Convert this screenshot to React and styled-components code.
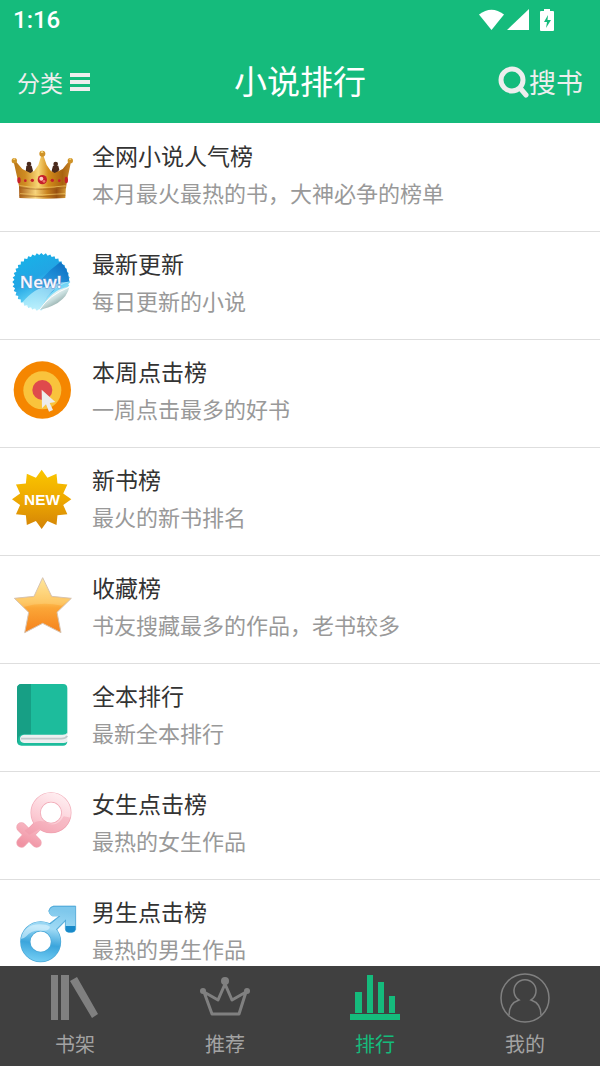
import React from "react";
import styled, { createGlobalStyle } from "styled-components";

const GlobalStyle = createGlobalStyle`
  * {
    box-sizing: border-box;
  }

  body {
    margin: 0;
    background: #ffffff;
    font-family: "Noto Sans CJK SC", "Noto Sans", sans-serif;
  }
`;

const Page = styled.div`
  display: flex;
  flex-direction: column;
  height: 100vh;
`;

const Header = styled.header`
  flex: none;
  background: #15bb7c;
  color: #ffffff;
`;

const StatusBar = styled.div`
  display: flex;
  align-items: center;
  height: 40px;
  padding: 0 46px 0 13px;
`;

const Clock = styled.time`
  flex: 1;
  font-family: Roboto, sans-serif;
  font-size: 24px;
  font-weight: 500;
  line-height: 40px;
`;

const StatusIcons = styled.div`
  display: flex;
  align-items: center;
  gap: 3px;

  svg:last-child {
    margin-left: 8px;
  }
`;

const TitleBar = styled.div`
  display: grid;
  grid-template-columns: 1fr auto 1fr;
  align-items: center;
  height: 83px;
  padding: 0 17px;
`;

const Title = styled.h1`
  margin: 0;
  padding-bottom: 4px;
  font-size: 33px;
  font-weight: 400;
  line-height: 48px;
`;

const BarButton = styled.button`
  display: flex;
  align-items: center;
  justify-self: ${(props) => (props.$end ? "end" : "start")};
  gap: ${(props) => (props.$end ? "0" : "7px")};
  padding: 0;
  border: none;
  background: none;
  color: #eeeeee;
  font-family: inherit;
  font-size: ${(props) => (props.$end ? "27px" : "23px")};
  line-height: 40px;
  cursor: pointer;
`;

const RankList = styled.ul`
  flex: 1;
  min-height: 0;
  margin: 0;
  padding: 1px 0 0;
  list-style: none;
  overflow-y: auto;
  scrollbar-width: none;
`;

const RankItem = styled.li`
  border-bottom: 1px solid #dedede;
`;

const RankLink = styled.a`
  display: flex;
  gap: 18px;
  padding: 16px 10px 24px;
  color: inherit;
  text-decoration: none;
`;

const RankIcon = styled.svg`
  flex: none;
  width: 64px;
  height: 64px;
  margin-top: 2px;
  overflow: visible;
`;

const RankText = styled.div`
  display: flex;
  flex-direction: column;
  gap: 7px;
  min-width: 0;
`;

const RankName = styled.span`
  color: #333333;
  font-size: 23px;
  line-height: 30px;
`;

const RankNote = styled.span`
  color: #999999;
  font-size: 22px;
  line-height: 30px;
`;

const TabBar = styled.nav`
  flex: none;
  display: grid;
  grid-template-columns: repeat(4, 1fr);
  background: #404040;
`;

const Tab = styled.button`
  display: flex;
  flex-direction: column;
  align-items: center;
  gap: 9px;
  padding: 7px 0 10px;
  border: none;
  background: none;
  color: ${(props) => (props.$active ? "#15bb7c" : "#a3a3a3")};
  font-family: inherit;
  font-size: 20px;
  line-height: 24px;
  cursor: pointer;

  svg {
    color: ${(props) => (props.$active ? "#15bb7c" : "#808080")};
  }
`;

const burst = (cx, cy, outer, inner, count) =>
  Array.from({ length: count * 2 }, (_, i) => {
    const r = i % 2 ? inner : outer;
    const a = (Math.PI * i) / count - Math.PI / 2;
    return `${(cx + r * Math.cos(a)).toFixed(1)},${(cy + r * Math.sin(a)).toFixed(1)}`;
  }).join(" ");

const GoldCrown = () => (
  <RankIcon viewBox="30 51 192 192" aria-hidden="true">
    <defs>
      <linearGradient id="gold" x1="0" x2="1">
        <stop offset="0" stopColor="#b97618" />
        <stop offset="0.2" stopColor="#d08c22" />
        <stop offset="0.43" stopColor="#f9d878" />
        <stop offset="0.6" stopColor="#d58e1c" />
        <stop offset="0.85" stopColor="#a9620f" />
        <stop offset="1" stopColor="#c98626" />
      </linearGradient>
      <linearGradient id="goldBand" x1="0" x2="1">
        <stop offset="0" stopColor="#a85c14" />
        <stop offset="0.35" stopColor="#f7d47c" />
        <stop offset="0.6" stopColor="#c98320" />
        <stop offset="0.8" stopColor="#984f10" />
        <stop offset="1" stopColor="#d39a35" />
      </linearGradient>
    </defs>
    <g fill="#4a2a1c">
      <circle cx="87" cy="117" r="7" />
      <circle cx="167" cy="117" r="7" />
      <path d="M79 122h16l4 15-8 18-14-15zM159 122h16l3 12-14 20-9-17z" />
    </g>
    <path
      d="M41 110l5-3 21 25 24 12 12-7 12-17 9-29h6l10 29 12 17 12 7 24-12 20-25 5 3-12 58-3 22H58l-4-22z"
      fill="url(#gold)"
    />
    <path d="M57 183q70 12 141 0l-2 36q-67 4-138 0z" fill="url(#goldBand)" />
    <path
      d="M57 188q70 10 141 0M58 212q68 5 138 0"
      fill="none"
      stroke="#a0601a"
      strokeWidth="2"
    />
    <path
      d="M58 182q70 11 139 0M60 206q68 7 135 0"
      fill="none"
      stroke="#f6ce6b"
      strokeWidth="2"
    />
    <g fill="#cf9227">
      <circle cx="43" cy="107" r="8" />
      <circle cx="127" cy="86" r="9" />
      <circle cx="211" cy="107" r="8" />
    </g>
    <path d="M122 84l4-8 5 7zM39 104l4-5 3 5zM207 104l4-5 3 5z" fill="#f8dc86" />
    <g fill="#c6202a">
      <circle cx="127" cy="164" r="14" />
      <ellipse cx="57" cy="166" rx="5" ry="9" />
      <ellipse cx="199" cy="165" rx="5" ry="10" />
      <circle cx="76" cy="167" r="4" />
      <circle cx="97" cy="166" r="5" />
      <circle cx="157" cy="166" r="5" />
      <circle cx="178" cy="167" r="4" />
    </g>
    <circle cx="124" cy="161" r="6" fill="#ffc9c2" />
    <circle cx="132" cy="169" r="4" fill="#ef7770" />
  </RankIcon>
);

const NewSticker = () => (
  <RankIcon viewBox="30 375 192 192" aria-hidden="true">
    <defs>
      <linearGradient id="sticker" x1="0.15" y1="0.05" x2="0.65" y2="1">
        <stop offset="0" stopColor="#18b2e8" />
        <stop offset="0.42" stopColor="#22a5e4" />
        <stop offset="0.65" stopColor="#54c9f2" />
        <stop offset="1" stopColor="#d2f8ff" />
      </linearGradient>
      <linearGradient id="shade" x1="1" y1="0" x2="0" y2="1">
        <stop offset="0" stopColor="#0b69be" />
        <stop offset="0.5" stopColor="#2194de" stopOpacity="0.8" />
        <stop offset="1" stopColor="#7adcf7" stopOpacity="0" />
      </linearGradient>
      <linearGradient id="peel" x1="0.25" y1="0.3" x2="0.65" y2="0.8">
        <stop offset="0" stopColor="#f9ffff" />
        <stop offset="0.5" stopColor="#c6dcdc" />
        <stop offset="1" stopColor="#8fa8a5" />
      </linearGradient>
      <clipPath id="stickerCut">
        <path d="M30 375h192v100l-12 5-90 80-10 10H30z" />
      </clipPath>
    </defs>
    <g clipPath="url(#stickerCut)">
      <polygon points={burst(124, 471, 87, 81, 40)} fill="url(#sticker)" />
      <path
        d="M181 411q25 20 27 58-34 8-48 29-27 20-38 54-33 1-53-15 50-82 112-126z"
        fill="url(#shade)"
      />
      <path d="M65 534q42-50 82-49 25-15 60-14-62 18-86 84-32 0-56-21z" fill="#d9fbff" opacity="0.55" />
    </g>
    <path d="M208 486q-30 3-50 21-25 21-38 47 22-3 53-20 30-20 35-48z" fill="url(#peel)" />
    <path d="M119 554q27-43 89-68" fill="none" stroke="#ffffff" strokeWidth="3" />
    <text
      x="122"
      y="489"
      textAnchor="middle"
      fontFamily="Open Sans, sans-serif"
      fontSize="51"
      fontWeight="600"
      fill="#f5f8ff"
      stroke="#7d98cc"
      strokeWidth="3"
      paintOrder="stroke"
    >
      New!
    </text>
  </RankIcon>
);

const ClickTarget = () => (
  <RankIcon viewBox="30 54 192 192" aria-hidden="true">
    <circle cx="127" cy="150" r="86" fill="#f58600" />
    <circle cx="127" cy="151" r="57" fill="#f9c33c" />
    <circle cx="127" cy="150" r="30" fill="#df4a4c" />
    <path d="M125 149l41 37-17 3 10 21-12 5-9-22-12 12z" fill="#ececec" />
  </RankIcon>
);

const NewBurst = () => (
  <RankIcon viewBox="30 378 192 192" aria-hidden="true">
    <defs>
      <linearGradient id="burst" x1="0" x2="0" y1="0" y2="1">
        <stop offset="0" stopColor="#fac600" />
        <stop offset="0.5" stopColor="#eea900" />
        <stop offset="1" stopColor="#d38307" />
      </linearGradient>
    </defs>
    <polygon points={burst(125, 478, 89, 67, 12)} fill="url(#burst)" />
    <text
      x="126"
      y="494"
      textAnchor="middle"
      fontFamily="Liberation Sans, sans-serif"
      fontSize="46"
      fontWeight="700"
      fill="#ffffff"
    >
      NEW
    </text>
  </RankIcon>
);

const FavouriteStar = () => (
  <RankIcon viewBox="30 57 192 192" aria-hidden="true">
    <defs>
      <linearGradient id="star" x1="0" x2="0" y1="0" y2="1">
        <stop offset="0" stopColor="#ffe89b" />
        <stop offset="0.45" stopColor="#fdbd50" />
        <stop offset="0.55" stopColor="#fba637" />
        <stop offset="1" stopColor="#f5811c" />
      </linearGradient>
    </defs>
    <path
      d="M128 68l27 56 59 6-43 42 12 61-55-28-54 28 12-61-43-42 59-6z"
      fill="url(#star)"
      stroke="#d7c4b2"
      strokeWidth="3"
      strokeLinejoin="round"
    />
    <path
      d="M128 72l26 55 56 5-24 20q-60-14-115 4l-25-24 56-5z"
      fill="#ffe9a8"
      opacity="0.25"
    />
  </RankIcon>
);

const GreenBook = () => (
  <RankIcon viewBox="30 381 192 192" aria-hidden="true">
    <path
      d="M65 387h124q13 0 13 13v133l-4 19 4 9q-2 11-13 11H65q-14 0-14-14V401q0-14 14-14z"
      fill="#1dbc9c"
    />
    <path d="M65 387h28v151H69q-9 0-13 8-5 8 0 18-5-3-5-10V401q0-14 14-14z" fill="#179f85" />
    <path d="M72 539h116q10 0 14-6v27q-5 4-12 4H72q-12-1-12-12 0-12 12-13z" fill="#ecf0f1" />
    <path d="M63 551h121q12 0 18-8" fill="none" stroke="#c0c9cc" strokeWidth="5" />
  </RankIcon>
);

const FemaleSign = () => (
  <RankIcon viewBox="30 63 192 192" aria-hidden="true">
    <defs>
      <linearGradient id="pink" gradientUnits="userSpaceOnUse" x1="170" y1="70" x2="95" y2="237">
        <stop offset="0" stopColor="#ffeef1" />
        <stop offset="0.5" stopColor="#fbc9d2" />
        <stop offset="1" stopColor="#f093a3" />
      </linearGradient>
    </defs>
    <g fill="none" stroke="#f1a9b6" strokeLinecap="round">
      <circle cx="153" cy="131" r="46" strokeWidth="31" />
      <path d="M117 166L64 221M64 175l46 46" strokeWidth="30" />
    </g>
    <g fill="none" stroke="url(#pink)" strokeLinecap="round">
      <circle cx="153" cy="131" r="46" strokeWidth="27" />
      <path d="M117 166L64 221M64 175l46 46" strokeWidth="26" />
    </g>
    <path
      d="M212 146q-11 43-57 46-20 1-37-11l-30 16-14-12 31-25q19-9 38 3 29 13 48-21 13 2 21 4z"
      fill="#ef8fa0"
      opacity="0.35"
    />
  </RankIcon>
);

const MaleSign = () => (
  <RankIcon viewBox="30 388 192 192" aria-hidden="true">
    <defs>
      <linearGradient id="blue" gradientUnits="userSpaceOnUse" x1="145" y1="420" x2="120" y2="585">
        <stop offset="0" stopColor="#7fc8ec" />
        <stop offset="0.35" stopColor="#9fdaf5" />
        <stop offset="0.65" stopColor="#3ba5dc" />
        <stop offset="1" stopColor="#7ad2f6" />
      </linearGradient>
    </defs>
    <g stroke="#4ba8d8">
      <circle cx="122" cy="519" r="46" fill="none" strokeWidth="31" />
      <path
        d="M161 412h66v70q-2 9-11 9h-10q-10-1-10-10v-24l-39 40-22-22 43-33h-20q-9-3-12-15 3-13 15-15z"
        fill="#4ba8d8"
        strokeWidth="2"
      />
    </g>
    <circle cx="122" cy="519" r="46" fill="none" stroke="url(#blue)" strokeWidth="27" />
    <path
      d="M162 414h63v67q-2 8-9 8h-9q-9-1-9-9v-28l-46 46-18-17 47-39h-25q-7-3-9-13 3-13 15-15z"
      fill="url(#blue)"
    />
    <path
      d="M63 510q8-42 56-43 20 0 31 7-2 14-24 12-30-4-47 17-8 8-16 7z"
      fill="#e5f7ff"
      opacity="0.55"
    />
    <path d="M197 472h29v10q-2 9-10 9h-10q-9-1-9-9z" fill="#1789c9" />
  </RankIcon>
);

const ranks = [
  { name: "全网小说人气榜", note: "本月最火最热的书，大神必争的榜单", Icon: GoldCrown },
  { name: "最新更新", note: "每日更新的小说", Icon: NewSticker },
  { name: "本周点击榜", note: "一周点击最多的好书", Icon: ClickTarget },
  { name: "新书榜", note: "最火的新书排名", Icon: NewBurst },
  { name: "收藏榜", note: "书友搜藏最多的作品，老书较多", Icon: FavouriteStar },
  { name: "全本排行", note: "最新全本排行", Icon: GreenBook },
  { name: "女生点击榜", note: "最热的女生作品", Icon: FemaleSign },
  { name: "男生点击榜", note: "最热的男生作品", Icon: MaleSign },
];

const ShelfIcon = () => (
  <svg width="50" height="50" viewBox="0 0 50 50" fill="currentColor" aria-hidden="true">
    <path d="M1 2h7v45H1zM11 2h8v45h-8zM20 8l7-4 21 37-6 4z" />
  </svg>
);

const CrownIcon = () => (
  <svg width="50" height="50" viewBox="0 0 50 50" fill="currentColor" aria-hidden="true">
    <path
      d="M4 19l8 22h27l7-22-14 8L25 11l-7 16z"
      fill="none"
      stroke="currentColor"
      strokeWidth="3"
      strokeLinejoin="round"
    />
    <circle cx="25" cy="8" r="4" />
    <circle cx="3" cy="18" r="3" />
    <circle cx="47" cy="18" r="3" />
  </svg>
);

const ChartIcon = () => (
  <svg width="50" height="50" viewBox="0 0 50 50" fill="currentColor" aria-hidden="true">
    <path d="M5 19h7v21H5zM17 2h6v38h-6zM28 9h6v31h-6zM39 23h6v17h-6zM0 41h50v6H0z" />
  </svg>
);

const UserIcon = () => (
  <svg
    width="50"
    height="50"
    viewBox="0 0 50 50"
    fill="none"
    stroke="currentColor"
    strokeWidth="1.5"
    aria-hidden="true"
  >
    <circle cx="25" cy="25" r="24" />
    <path d="M9 42c0-8 4-13 10-15a11 11 0 1 1 12 0c6 2 10 7 10 15" />
  </svg>
);

const tabs = [
  { label: "书架", Icon: ShelfIcon },
  { label: "推荐", Icon: CrownIcon },
  { label: "排行", Icon: ChartIcon, active: true },
  { label: "我的", Icon: UserIcon },
];

const App = () => {
  return (
    <Page lang="zh-CN">
      <GlobalStyle />
      <Header>
        <StatusBar>
          <Clock>1:16</Clock>
          <StatusIcons>
            <svg width="25" height="22" viewBox="0 0 25 22" fill="#fff" aria-hidden="true">
              <path d="M0 5.500Q12.500-4 25 5.500L12.500 21z" />
            </svg>
            <svg width="22" height="22" viewBox="0 0 22 22" fill="#fff" aria-hidden="true">
              <path d="M22 0v21H0z" />
            </svg>
            <svg width="14" height="22" viewBox="0 0 14 22" aria-hidden="true">
              <path d="M4 0h6v2h3q1 0 1 1v18q0 1-1 1H1q-1 0-1-1V3q0-1 1-1h3z" fill="#fff" />
              <path d="M8 6L4 13h3l-1 6 5-8H7.500z" fill="#15bb7c" />
            </svg>
          </StatusIcons>
        </StatusBar>
        <TitleBar>
          <BarButton type="button">
            分类
            <svg width="21" height="18" viewBox="0 0 21 18" fill="currentColor" aria-hidden="true">
              <path d="M0 0h20v4H0zM0 7h20v4H0zM0 14h20v4H0z" />
            </svg>
          </BarButton>
          <Title>小说排行</Title>
          <BarButton type="button" $end>
            <svg
              width="32"
              height="32"
              viewBox="0 0 32 32"
              fill="none"
              stroke="currentColor"
              strokeWidth="5"
              strokeLinecap="round"
              aria-hidden="true"
            >
              <circle cx="15" cy="14" r="11" />
              <path d="M23 22l6 7" />
            </svg>
            搜书
          </BarButton>
        </TitleBar>
      </Header>
      <RankList>
        {ranks.map(({ name, note, Icon }) => (
          <RankItem key={name}>
            <RankLink href="#">
              <Icon />
              <RankText>
                <RankName>{name}</RankName>
                <RankNote>{note}</RankNote>
              </RankText>
            </RankLink>
          </RankItem>
        ))}
      </RankList>
      <TabBar>
        {tabs.map(({ label, Icon, active }) => (
          <Tab key={label} type="button" $active={active}>
            <Icon />
            {label}
          </Tab>
        ))}
      </TabBar>
    </Page>
  );
};

export default App;
